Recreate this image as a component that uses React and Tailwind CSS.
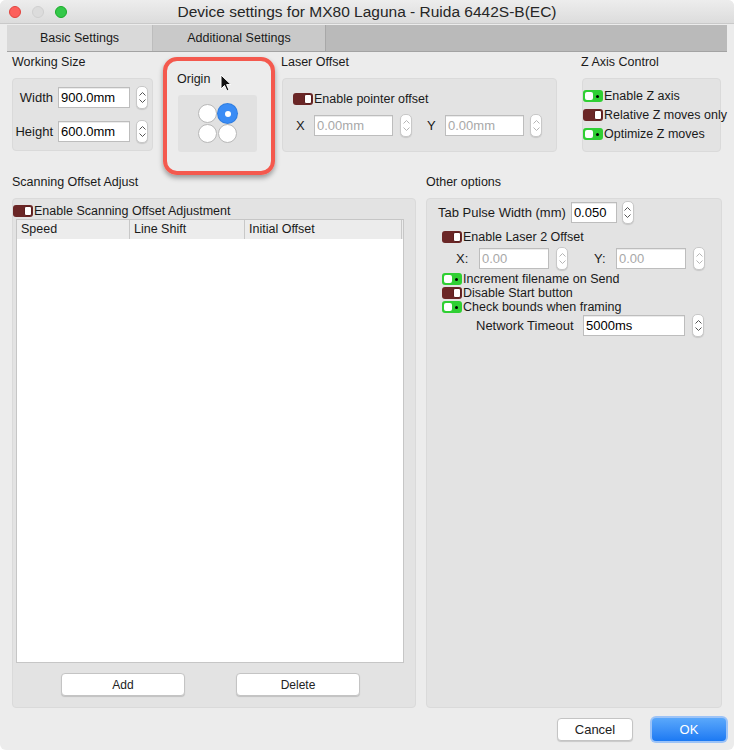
import { useState } from "react";

const font = { fontFamily: '"Liberation Sans", Arial, sans-serif' };

function Toggle({ on }) {
  if (on) {
    return (
      <span className="flex h-[12px] w-[20px] shrink-0 items-center rounded-[3px] bg-[#2fcf33] p-[2px]">
        <span className="h-[8px] w-[8px] rounded-[2px] bg-white" />
        <span className="flex flex-1 items-center justify-center">
          <span className="h-[3px] w-[3px] rounded-full bg-black" />
        </span>
      </span>
    );
  }
  return (
    <span className="flex h-[12px] w-[20px] shrink-0 items-center justify-end rounded-[3px] bg-[#6a2626] p-[1px]">
      <span className="h-[10px] w-[8px] rounded-[2px] border border-[#5a1e1e] bg-white" />
    </span>
  );
}

function Check({ on, children, className = "" }) {
  return (
    <div className={`flex items-center gap-[1px] whitespace-nowrap text-[12.5px] leading-[14px] text-[#1a1a1a] ${className}`}>
      <Toggle on={on} />
      <span>{children}</span>
    </div>
  );
}

function Stepper({ dim }) {
  const c = dim ? "#b5b5b5" : "#555";
  return (
    <span className="flex h-[23px] w-[12px] shrink-0 flex-col items-center justify-center gap-[3px] rounded-[5px] border border-[#c8c8c8] bg-white shadow-[0_1px_1px_rgba(0,0,0,0.12)]">
      <svg width="7" height="4" viewBox="0 0 7 4">
        <path d="M0.5 3.5 L3.5 0.5 L6.5 3.5" fill="none" stroke={c} strokeWidth="1" />
      </svg>
      <svg width="7" height="4" viewBox="0 0 7 4">
        <path d="M0.5 0.5 L3.5 3.5 L6.5 0.5" fill="none" stroke={c} strokeWidth="1" />
      </svg>
    </span>
  );
}

function Field({ value, w, dim }) {
  return (
    <span
      className={`flex h-[21px] items-center border border-[#bdbdbd] bg-white px-[2px] text-[13px] shadow-[inset_0_1px_0_rgba(0,0,0,0.08)] ${
        dim ? "text-[#a8a8a8]" : "text-black"
      } ${w}`}
    >
      {value}
    </span>
  );
}

function Group({ children, className = "" }) {
  return (
    <div className={`rounded-[4px] border border-[#dadada] bg-[#e3e3e3] ${className}`}>{children}</div>
  );
}

function Radio({ on }) {
  if (on) {
    return (
      <span className="flex h-[19px] w-[19px] items-center justify-center rounded-full bg-[#3a8cf5] shadow-[0_0_0_1px_#2f7de0]">
        <span className="h-[6px] w-[6px] rounded-full bg-white" />
      </span>
    );
  }
  return <span className="h-[19px] w-[19px] rounded-full border border-[#b8b8b8] bg-white" />;
}

function Button({ children, className = "" }) {
  return (
    <button
      type="button"
      className={`flex h-[23px] items-center justify-center rounded-[4px] border border-[#c4c4c4] bg-white text-[12px] text-[#222] shadow-[0_1px_1px_rgba(0,0,0,0.15)] ${className}`}
    >
      {children}
    </button>
  );
}

export default function App() {
  const [tab, setTab] = useState("additional");

  return (
    <div className="h-[750px] w-[734px] overflow-hidden bg-white" style={font}>
      <div className="relative flex h-[750px] w-[734px] flex-col overflow-hidden rounded-[6px] bg-[#ececec]">
        {/* title bar */}
        <div className="relative flex h-[24px] items-center justify-center border-b border-[#c9c9c9] bg-gradient-to-b from-[#ededed] to-[#dcdcdc]">
          <div className="absolute left-[9px] top-[6px] flex gap-[11px]">
            <span className="h-[12px] w-[12px] rounded-full border border-[#e0443e] bg-[#fc605c]" />
            <span className="h-[12px] w-[12px] rounded-full border border-[#cfcfcf] bg-[#dcdcdc]" />
            <span className="h-[12px] w-[12px] rounded-full border border-[#1aab29] bg-[#34c84a]" />
          </div>
          <span className="text-[15.5px] text-[#262626]">Device settings for MX80 Laguna - Ruida 6442S-B(EC)</span>
        </div>

        {/* tabs */}
        <div className="mx-[7px] mt-[1px] flex h-[27px] border-b border-[#a3a3a3] bg-[#bababa] text-[12.5px] text-[#1a1a1a]">
          <button
            type="button"
            onClick={() => setTab("basic")}
            className="flex w-[146px] items-center justify-center border-r border-[#bdbdbd] bg-[#d9d9d9]"
          >
            Basic Settings
          </button>
          <button
            type="button"
            onClick={() => setTab("additional")}
            className="flex w-[173px] items-center justify-center border-r border-[#a8a8a8] bg-[#c9c9c9]"
          >
            Additional Settings
          </button>
          <div className="flex-1" />
        </div>

        {/* top row */}
        <div className="flex gap-[24px] px-[12px] pt-[3px] text-[12.5px] text-[#1a1a1a]">
          <div className="w-[141px]">
            <div className="h-[14px] leading-[14px]">Working Size</div>
            <Group className="mt-[9px] flex h-[73px] flex-col justify-center gap-[11px]">
              <div className="flex items-center">
                <span className="w-[40px] text-right text-[13px]">Width</span>
                <span className="w-[5px]" />
                <Field value="900.0mm" w="w-[72px]" />
                <span className="w-[6px]" />
                <Stepper />
              </div>
              <div className="flex items-center">
                <span className="w-[40px] text-right text-[13px]">Height</span>
                <span className="w-[5px]" />
                <Field value="600.0mm" w="w-[72px]" />
                <span className="w-[6px]" />
                <Stepper />
              </div>
            </Group>
          </div>

          <div className="relative w-[80px]">
            <div className="mt-[17px] h-[14px] leading-[14px]">Origin</div>
            <div className="ml-[1px] mt-[9px] grid h-[57px] w-[79px] place-items-center rounded-[3px] bg-[#e1e1e1]">
              <div className="grid grid-cols-2 gap-[1px]">
                <Radio />
                <Radio on />
                <Radio />
                <Radio />
              </div>
            </div>
            {/* annotation frame */}
            <div className="pointer-events-none absolute left-[-14px] top-[2px] h-[118px] w-[112px] rounded-[14px] border-[4px] border-[#f4594e] shadow-[0_3px_5px_rgba(0,0,0,0.35)]" />
            {/* cursor */}
            <svg className="absolute left-[43px] top-[19px]" width="12" height="18" viewBox="0 0 12 18">
              <path d="M1 1 L1 15 L4.5 11.5 L7 17 L9 16 L6.6 10.6 L11 10.6 Z" fill="#111" stroke="#fff" strokeWidth="1" />
            </svg>
          </div>

          <div className="w-[276px]">
            <div className="h-[14px] leading-[14px]">Laser Offset</div>
            <Group className="ml-[1px] mt-[9px] h-[74px] pl-[10px] pt-[13px]">
              <Check on={false}>Enable pointer offset</Check>
              <div className="mt-[8px] flex items-center">
                <span className="w-[21px] pl-[3px] text-[13px]">X</span>
                <Field value="0.00mm" w="w-[79px]" dim />
                <span className="w-[7px]" />
                <Stepper dim />
                <span className="w-[15px]" />
                <span className="w-[18px] text-[13px]">Y</span>
                <Field value="0.00mm" w="w-[79px]" dim />
                <span className="w-[6px]" />
                <Stepper dim />
              </div>
            </Group>
          </div>

          <div className="w-[140px]">
            <div className="h-[14px] leading-[14px]">Z Axis Control</div>
            <Group className="ml-[1px] mt-[9px] flex h-[74px] flex-col gap-[5px] pt-[10px]">
              <Check on>Enable Z axis</Check>
              <Check on={false}>Relative Z moves only</Check>
              <Check on>Optimize Z moves</Check>
            </Group>
          </div>
        </div>

        {/* lower row */}
        <div className="mt-[23px] flex gap-[10px] px-[12px] text-[12.5px] text-[#1a1a1a]">
          <div className="w-[404px]">
            <div className="h-[14px] leading-[14px]">Scanning Offset Adjust</div>
            <Group className="mt-[9px] flex h-[510px] flex-col pr-[11px] pt-[5px]">
              <Check on={false}>Enable Scanning Offset Adjustment</Check>
              <div className="ml-[3px] mt-[1px] flex h-[444px] flex-col border border-[#c6c6c6] bg-white">
                <div className="flex h-[19px] bg-[#ececec] text-[12.5px]">
                  <div className="w-[113px] border-r border-[#c8c8c8] pl-[4px] leading-[19px]">Speed</div>
                  <div className="w-[115px] border-r border-[#c8c8c8] pl-[4px] leading-[19px]">Line Shift</div>
                  <div className="flex-1 border-r border-[#c8c8c8] pl-[4px] leading-[19px]">Initial Offset</div>
                  <div className="w-[1px]" />
                </div>
              </div>
              <div className="mt-[10px] flex gap-[51px] pl-[48px]">
                <Button className="w-[124px]">Add</Button>
                <Button className="w-[124px]">Delete</Button>
              </div>
            </Group>
          </div>

          <div className="w-[296px]">
            <div className="h-[14px] leading-[14px]">Other options</div>
            <Group className="mt-[9px] h-[510px] pl-[11px] pt-[2px]">
              <div className="flex items-center">
                <span className="text-[13px]">Tab Pulse Width (mm)</span>
                <span className="w-[5px]" />
                <Field value="0.050" w="w-[46px]" />
                <span className="w-[5px]" />
                <Stepper />
              </div>
              <Check on={false} className="ml-[4px] mt-[6px]">
                Enable Laser 2 Offset
              </Check>
              <div className="mt-[3px] flex items-center">
                <span className="w-[41px] pl-[18px] text-[13px]">X:</span>
                <Field value="0.00" w="w-[70px]" dim />
                <span className="w-[7px]" />
                <Stepper dim />
                <span className="w-[26px]" />
                <span className="w-[22px] text-[13px]">Y:</span>
                <Field value="0.00" w="w-[70px]" dim />
                <span className="w-[7px]" />
                <Stepper dim />
              </div>
              <div className="ml-[4px] mt-[2px] flex flex-col">
                <Check on>Increment filename on Send</Check>
                <Check on={false}>Disable Start button</Check>
                <Check on>Check bounds when framing</Check>
              </div>
              <div className="mt-[0px] flex items-center">
                <span className="w-[145px] pl-[38px] text-[13px]">Network Timeout</span>
                <Field value="5000ms" w="w-[102px]" />
                <span className="w-[7px]" />
                <Stepper />
              </div>
            </Group>
          </div>
        </div>

        {/* dialog buttons */}
        <div className="mt-[8px] flex items-center justify-end gap-[17px] pr-[6px]">
          <Button className="h-[23px] w-[76px] text-[13px]">Cancel</Button>
          <div className="rounded-[6px] bg-[#9cc3f7] p-[2px]">
            <button
              type="button"
              className="flex h-[23px] w-[74px] items-center justify-center rounded-[4px] bg-gradient-to-b from-[#5aa8fb] to-[#1b79f3] text-[13px] text-white"
            >
              OK
            </button>
          </div>
        </div>
      </div>
    </div>
  );
}
